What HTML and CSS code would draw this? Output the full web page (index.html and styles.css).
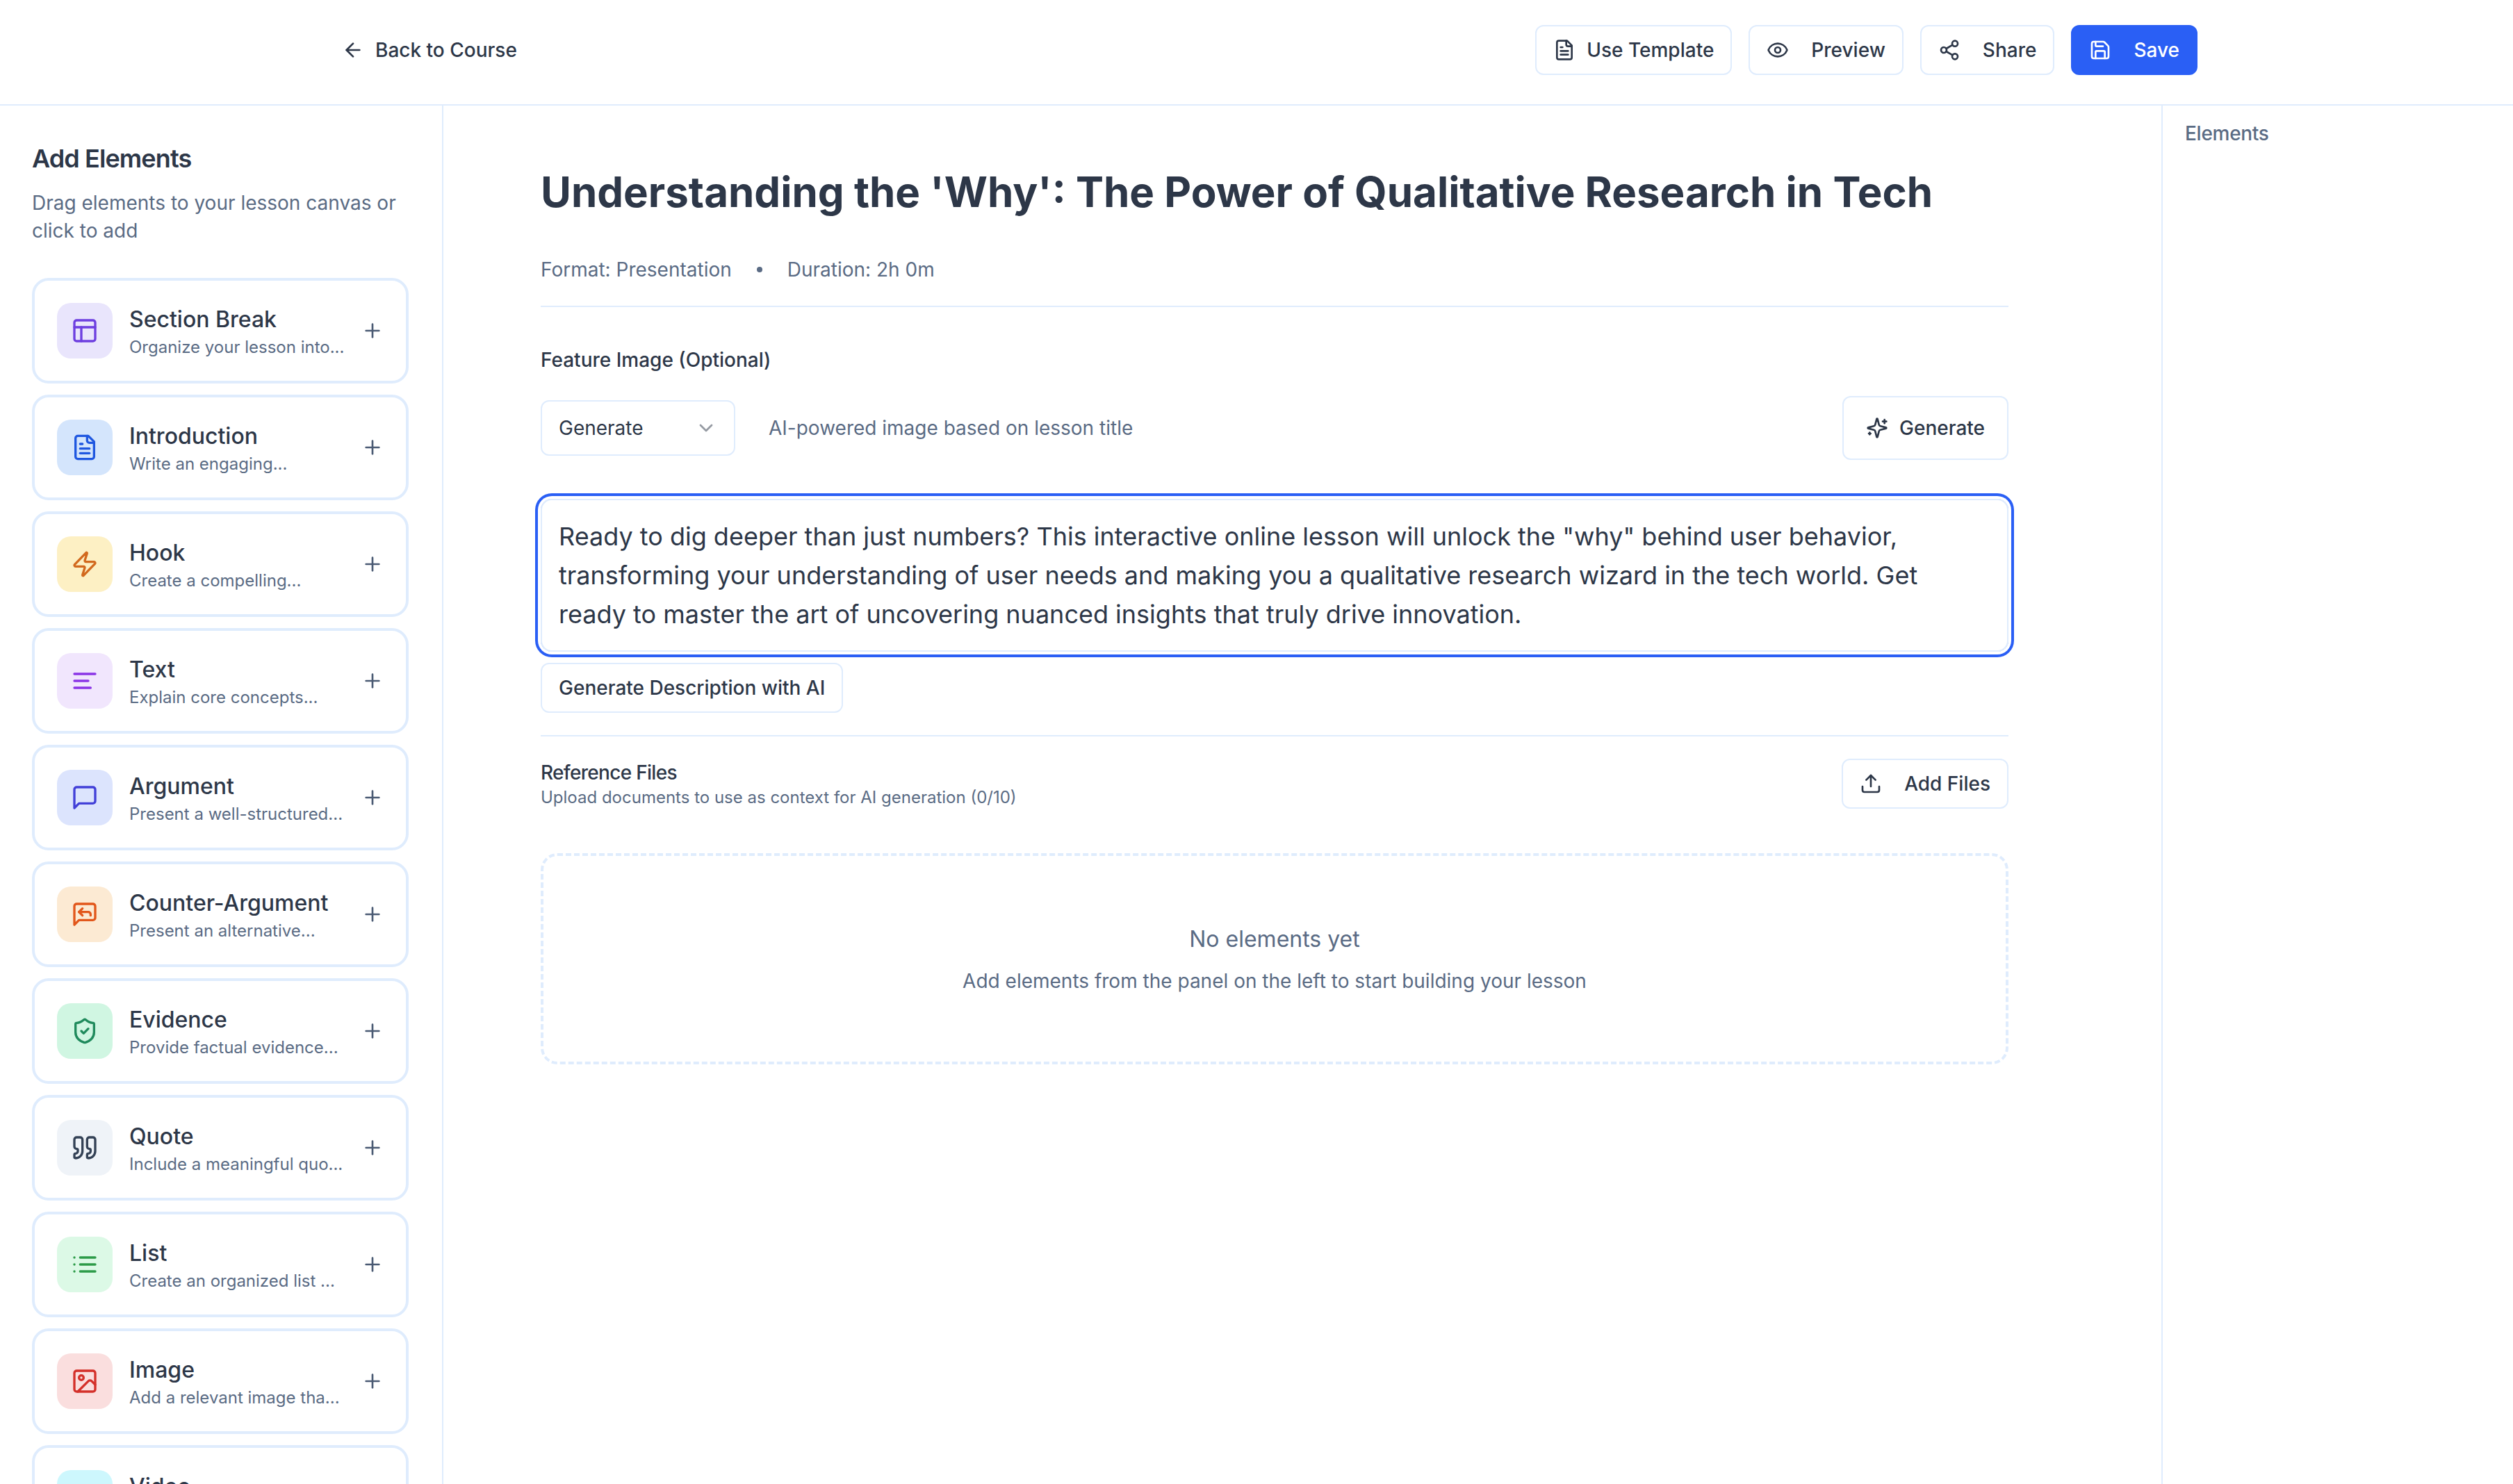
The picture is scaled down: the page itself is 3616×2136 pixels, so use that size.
FILE: index.html
```html
<!DOCTYPE html>
<html lang="en">
<head>
<meta charset="utf-8">
<title>Lesson editor</title>
<link rel="stylesheet" href="styles.css">
</head>
<body>
<svg class="sprite" width="0" height="0" aria-hidden="true">
  <symbol id="i-arrow-left" viewBox="0 0 24 24"><path d="m12 19-7-7 7-7"/><path d="M19 12H5"/></symbol>
  <symbol id="i-file-text" viewBox="0 0 24 24"><path d="M15 2H6a2 2 0 0 0-2 2v16a2 2 0 0 0 2 2h12a2 2 0 0 0 2-2V7Z"/><path d="M14 2v4a2 2 0 0 0 2 2h4"/><path d="M10 9H8"/><path d="M16 13H8"/><path d="M16 17H8"/></symbol>
  <symbol id="i-eye" viewBox="0 0 24 24"><path d="M2.062 12.348a1 1 0 0 1 0-.696 10.75 10.75 0 0 1 19.876 0 1 1 0 0 1 0 .696 10.75 10.75 0 0 1-19.876 0"/><circle cx="12" cy="12" r="3"/></symbol>
  <symbol id="i-share" viewBox="0 0 24 24"><circle cx="18" cy="5" r="3"/><circle cx="6" cy="12" r="3"/><circle cx="18" cy="19" r="3"/><line x1="8.59" y1="13.51" x2="15.42" y2="17.49"/><line x1="15.41" y1="6.51" x2="8.59" y2="10.49"/></symbol>
  <symbol id="i-save" viewBox="0 0 24 24"><path d="M15.2 3a2 2 0 0 1 1.4.6l3.8 3.8a2 2 0 0 1 .6 1.4V19a2 2 0 0 1-2 2H5a2 2 0 0 1-2-2V5a2 2 0 0 1 2-2z"/><path d="M17 21v-7a1 1 0 0 0-1-1H8a1 1 0 0 0-1 1v7"/><path d="M7 3v4a1 1 0 0 0 1 1h7"/></symbol>
  <symbol id="i-plus" viewBox="0 0 24 24"><path d="M5 12h14"/><path d="M12 5v14"/></symbol>
  <symbol id="i-layout" viewBox="0 0 24 24"><rect width="18" height="18" x="3" y="3" rx="2"/><path d="M3 9h18"/><path d="M9 21V9"/></symbol>
  <symbol id="i-zap" viewBox="0 0 24 24"><path d="M4 14a1 1 0 0 1-.78-1.63l9.9-10.2a.5.5 0 0 1 .86.46l-1.92 6.02A1 1 0 0 0 13 10h7a1 1 0 0 1 .78 1.63l-9.9 10.2a.5.5 0 0 1-.86-.46l1.92-6.02A1 1 0 0 0 11 14z"/></symbol>
  <symbol id="i-align" viewBox="0 0 24 24"><path d="M21 6H3"/><path d="M15 12H3"/><path d="M17 18H3"/></symbol>
  <symbol id="i-message" viewBox="0 0 24 24"><path d="M21 15a2 2 0 0 1-2 2H7l-4 4V5a2 2 0 0 1 2-2h14a2 2 0 0 1 2 2z"/></symbol>
  <symbol id="i-reply" viewBox="0 0 24 24"><path d="M21 15a2 2 0 0 1-2 2H7l-4 4V5a2 2 0 0 1 2-2h14a2 2 0 0 1 2 2z"/><path d="m10 7-3 3 3 3"/><path d="M17 13v-1a2 2 0 0 0-2-2H7"/></symbol>
  <symbol id="i-shield" viewBox="0 0 24 24"><path d="M20 13c0 5-3.5 7.5-7.66 8.95a1 1 0 0 1-.67-.01C7.5 20.5 4 18 4 13V6a1 1 0 0 1 1-1c2 0 4.5-1.2 6.24-2.72a1.17 1.17 0 0 1 1.52 0C14.51 3.81 17 5 19 5a1 1 0 0 1 1 1z"/><path d="m9 12 2 2 4-4"/></symbol>
  <symbol id="i-quote" viewBox="0 0 24 24"><path d="M16 3a2 2 0 0 0-2 2v6a2 2 0 0 0 2 2 1 1 0 0 1 1 1v1a2 2 0 0 1-2 2 1 1 0 0 0-1 1v2a1 1 0 0 0 1 1 6 6 0 0 0 6-6V5a2 2 0 0 0-2-2z"/><path d="M5 3a2 2 0 0 0-2 2v6a2 2 0 0 0 2 2 1 1 0 0 1 1 1v1a2 2 0 0 1-2 2 1 1 0 0 0-1 1v2a1 1 0 0 0 1 1 6 6 0 0 0 6-6V5a2 2 0 0 0-2-2z"/></symbol>
  <symbol id="i-list" viewBox="0 0 24 24"><path d="M3 12h.01"/><path d="M3 18h.01"/><path d="M3 6h.01"/><path d="M8 12h13"/><path d="M8 18h13"/><path d="M8 6h13"/></symbol>
  <symbol id="i-image" viewBox="0 0 24 24"><rect width="18" height="18" x="3" y="3" rx="2"/><circle cx="9" cy="9" r="2"/><path d="m21 15-3.086-3.086a2 2 0 0 0-2.828 0L6 21"/></symbol>
  <symbol id="i-video" viewBox="0 0 24 24"><path d="m16 13 5.223 3.482a.5.5 0 0 0 .777-.416V7.87a.5.5 0 0 0-.752-.432L16 10.5"/><rect x="2" y="6" width="14" height="12" rx="2"/></symbol>
  <symbol id="i-chevron" viewBox="0 0 24 24"><path d="m6 9 6 6 6-6"/></symbol>
  <symbol id="i-sparkles" viewBox="0 0 24 24"><path d="M9.937 15.5A2 2 0 0 0 8.5 14.063l-6.135-1.582a.5.5 0 0 1 0-.962L8.5 9.936A2 2 0 0 0 9.937 8.5l1.582-6.135a.5.5 0 0 1 .963 0L14.063 8.5A2 2 0 0 0 15.5 9.937l6.135 1.581a.5.5 0 0 1 0 .964L15.5 14.063a2 2 0 0 0-1.437 1.437l-1.582 6.135a.5.5 0 0 1-.963 0z"/><path d="M20 3v4"/><path d="M22 5h-4"/><path d="M4 17v2"/><path d="M5 18H3"/></symbol>
  <symbol id="i-upload" viewBox="0 0 24 24"><path d="M21 15v4a2 2 0 0 1-2 2H5a2 2 0 0 1-2-2v-4"/><polyline points="17 8 12 3 7 8"/><line x1="12" y1="3" x2="12" y2="15"/></symbol>
</svg>

<div class="app">
  <header class="topbar">
    <a class="back"><svg class="icon"><use href="#i-arrow-left"/></svg><span>Back to Course</span></a>
    <div class="actions">
      <button class="btn"><svg class="icon"><use href="#i-file-text"/></svg><span>Use Template</span></button>
      <button class="btn btn-wide"><svg class="icon"><use href="#i-eye"/></svg><span>Preview</span></button>
      <button class="btn btn-wide"><svg class="icon"><use href="#i-share"/></svg><span>Share</span></button>
      <button class="btn btn-wide btn-primary"><svg class="icon"><use href="#i-save"/></svg><span>Save</span></button>
    </div>
  </header>

  <div class="workspace">
    <aside class="sidebar">
      <h2 class="side-title">Add Elements</h2>
      <p class="side-desc">Drag elements to your lesson canvas or click to add</p>
      <ul class="cards">
        <li class="card"><span class="tile t-violet"><svg class="glyph"><use href="#i-layout"/></svg></span><div class="card-text"><h3>Section Break</h3><p>Organize your lesson into...</p></div><svg class="icon plus"><use href="#i-plus"/></svg></li>
        <li class="card"><span class="tile t-blue"><svg class="glyph"><use href="#i-file-text"/></svg></span><div class="card-text"><h3>Introduction</h3><p>Write an engaging...</p></div><svg class="icon plus"><use href="#i-plus"/></svg></li>
        <li class="card"><span class="tile t-amber"><svg class="glyph"><use href="#i-zap"/></svg></span><div class="card-text"><h3>Hook</h3><p>Create a compelling...</p></div><svg class="icon plus"><use href="#i-plus"/></svg></li>
        <li class="card"><span class="tile t-purple"><svg class="glyph"><use href="#i-align"/></svg></span><div class="card-text"><h3>Text</h3><p>Explain core concepts...</p></div><svg class="icon plus"><use href="#i-plus"/></svg></li>
        <li class="card"><span class="tile t-indigo"><svg class="glyph"><use href="#i-message"/></svg></span><div class="card-text"><h3>Argument</h3><p>Present a well-structured...</p></div><svg class="icon plus"><use href="#i-plus"/></svg></li>
        <li class="card"><span class="tile t-orange"><svg class="glyph"><use href="#i-reply"/></svg></span><div class="card-text"><h3>Counter-Argument</h3><p>Present an alternative...</p></div><svg class="icon plus"><use href="#i-plus"/></svg></li>
        <li class="card"><span class="tile t-emerald"><svg class="glyph"><use href="#i-shield"/></svg></span><div class="card-text"><h3>Evidence</h3><p>Provide factual evidence...</p></div><svg class="icon plus"><use href="#i-plus"/></svg></li>
        <li class="card"><span class="tile t-slate"><svg class="glyph"><use href="#i-quote"/></svg></span><div class="card-text"><h3>Quote</h3><p>Include a meaningful quo...</p></div><svg class="icon plus"><use href="#i-plus"/></svg></li>
        <li class="card"><span class="tile t-green"><svg class="glyph"><use href="#i-list"/></svg></span><div class="card-text"><h3>List</h3><p>Create an organized list ...</p></div><svg class="icon plus"><use href="#i-plus"/></svg></li>
        <li class="card"><span class="tile t-red"><svg class="glyph"><use href="#i-image"/></svg></span><div class="card-text"><h3>Image</h3><p>Add a relevant image tha...</p></div><svg class="icon plus"><use href="#i-plus"/></svg></li>
        <li class="card"><span class="tile t-cyan"><svg class="glyph"><use href="#i-video"/></svg></span><div class="card-text"><h3>Video</h3><p>Embed a video...</p></div><svg class="icon plus"><use href="#i-plus"/></svg></li>
      </ul>
    </aside>

    <main class="canvas">
      <div class="lesson">
        <h1 class="lesson-title">Understanding the 'Why': The Power of Qualitative Research in Tech</h1>
        <div class="meta"><span>Format: Presentation</span><span class="dot"></span><span>Duration: 2h 0m</span></div>

        <h4 class="field-label">Feature Image (Optional)</h4>
        <div class="image-row">
          <div class="select"><span>Generate</span><svg class="icon chevron"><use href="#i-chevron"/></svg></div>
          <span class="hint">AI-powered image based on lesson title</span>
          <button class="btn btn-tall"><svg class="icon"><use href="#i-sparkles"/></svg><span>Generate</span></button>
        </div>

        <div class="description">Ready to dig deeper than just numbers? This interactive online lesson will unlock the "why" behind user behavior, transforming your understanding of user needs and making you a qualitative research wizard in the tech world. Get ready to master the art of uncovering nuanced insights that truly drive innovation.</div>
        <button class="btn btn-ai"><span>Generate Description with AI</span></button>

        <div class="refs">
          <div class="refs-text"><h4>Reference Files</h4><p>Upload documents to use as context for AI generation (0/10)</p></div>
          <button class="btn btn-wide"><svg class="icon"><use href="#i-upload"/></svg><span>Add Files</span></button>
        </div>

        <div class="empty">
          <h5>No elements yet</h5>
          <p>Add elements from the panel on the left to start building your lesson</p>
        </div>
      </div>
    </main>

    <aside class="outline"><h3>Elements</h3></aside>
  </div>
</div>
</body>
</html>
```
FILE: styles.css
```css
* { box-sizing: border-box; margin: 0; padding: 0; }
html, body { height: 100%; }
body { font-family: Inter, "Liberation Sans", sans-serif; background: #fff; color: #2d3748; overflow: hidden; }
.sprite { position: absolute; }
.icon { width: 32px; height: 32px; flex: none; fill: none; stroke: currentColor; stroke-width: 2; stroke-linecap: round; stroke-linejoin: round; }
.glyph { width: 40px; height: 40px; fill: none; stroke: currentColor; stroke-width: 2; stroke-linecap: round; stroke-linejoin: round; }

.app { height: 2136px; display: flex; flex-direction: column; }
.topbar { height: 152px; flex: none; border-bottom: 2px solid #dfecfd; display: flex; align-items: center; justify-content: space-between; padding: 0 454px 6px 492px; }
.back { display: flex; align-items: center; gap: 16px; font-size: 28px; font-weight: 500; color: #2d3748; }
.actions { display: flex; gap: 24px; }
.btn { display: inline-flex; align-items: center; gap: 16px; height: 72px; padding: 0 24px; border: 2px solid #dfecfd; border-radius: 12px; background: #fff; font-family: inherit; font-size: 28px; font-weight: 500; color: #2d3748; white-space: nowrap; }
.btn-wide { gap: 32px; }
.btn-primary { background: #2a5ff5; border-color: #2a5ff5; color: #fff; }
.btn-tall { height: 92px; padding: 0 32px; margin-left: auto; }
.btn-ai { margin-top: 16px; }

.workspace { flex: 1; display: flex; min-height: 0; }
.sidebar { width: 638px; flex: none; border-right: 2px solid #dfecfd; padding: 50px 48px 0 46px; overflow: hidden; }
.side-title { font-size: 36px; line-height: 52px; font-weight: 600; letter-spacing: -0.025em; color: #2d3748; }
.side-desc { margin-top: 18px; font-size: 28px; line-height: 40px; color: #5a6b84; }
.cards { list-style: none; display: flex; flex-direction: column; gap: 16px; margin-top: 48px; }
.card { height: 152px; flex: none; border: 4px solid #dfecfd; border-radius: 24px; background: #fff; padding: 32px; display: flex; align-items: center; gap: 24px; }
.tile { width: 80px; height: 80px; flex: none; border-radius: 20px; display: flex; align-items: center; justify-content: center; }
.card-text { flex: 1; min-width: 0; }
.card-text h3 { font-size: 32px; line-height: 48px; font-weight: 500; color: #2d3748; }
.card-text p { font-size: 24px; line-height: 32px; color: #5a6b84; white-space: nowrap; }
.plus { color: #4a5a73; }
.t-violet { background: #e9e5fc; color: #6d3fe0; }
.t-blue { background: #d4e5fc; color: #1f57e0; }
.t-amber { background: #fdf0c4; color: #d2691e; }
.t-purple { background: #f1e6fd; color: #8a34e6; }
.t-indigo { background: #dce4fd; color: #4240d8; }
.t-orange { background: #fcead3; color: #e2571b; }
.t-emerald { background: #d0f6e2; color: #1f8a5c; }
.t-slate { background: #eff3f8; color: #334155; }
.t-green { background: #dcf9e6; color: #2c9b48; }
.t-red { background: #fadede; color: #d4302a; }
.t-cyan { background: #cdf7fd; color: #0891b2; }

.canvas { flex: 1; min-width: 0; padding-left: 140px; overflow: hidden; }
.lesson { width: 2112px; }
.lesson-title { margin-top: 84px; font-size: 60px; line-height: 80px; font-weight: 700; color: #2d3748; white-space: nowrap; }
.meta { margin-top: 52px; height: 40px; display: flex; align-items: center; gap: 36px; font-size: 28px; color: #5a6b84; }
.dot { width: 8px; height: 8px; border-radius: 50%; background: #5a6b84; }
.field-label { padding-top: 56px; border-top: 2px solid #dfecfd; font-size: 28px; line-height: 40px; font-weight: 500; color: #2d3748; }
.meta + .field-label { margin-top: 32px; }
.image-row { margin-top: 32px; display: flex; align-items: center; gap: 48px; }
.select { width: 280px; height: 80px; padding: 0 24px; border: 2px solid #dfecfd; border-radius: 12px; display: flex; align-items: center; justify-content: space-between; font-size: 28px; color: #2d3748; }
.chevron { opacity: .5; }
.hint { font-size: 28px; color: #5a6b84; }
.description { margin-top: 56px; height: 220px; padding: 24px; border: 2px solid #dfecfd; border-radius: 16px; font-size: 36px; line-height: 56px; color: #2d3748; box-shadow: 0 0 0 4px #fff, 0 0 0 8px #2a5ff5; }
.refs { margin-top: 32px; padding-top: 32px; border-top: 2px solid #dfecfd; display: flex; align-items: center; justify-content: space-between; }
.refs-text h4 { font-size: 28px; line-height: 40px; font-weight: 500; letter-spacing: -0.025em; color: #2d3748; }
.refs-text p { font-size: 24px; line-height: 32px; color: #5a6b84; }
.empty { margin-top: 64px; height: 304px; border: 4px dashed #dfecfd; border-radius: 24px; display: flex; flex-direction: column; align-items: center; justify-content: center; color: #5a6b84; }
.empty h5 { font-size: 32px; line-height: 48px; font-weight: 400; }
.empty p { margin-top: 16px; font-size: 28px; line-height: 40px; }

.outline { width: 506px; flex: none; border-left: 2px solid #dfecfd; padding: 20px 32px; }
.outline h3 { font-size: 28px; line-height: 40px; font-weight: 500; letter-spacing: -0.01em; color: #5a6b84; }
```
